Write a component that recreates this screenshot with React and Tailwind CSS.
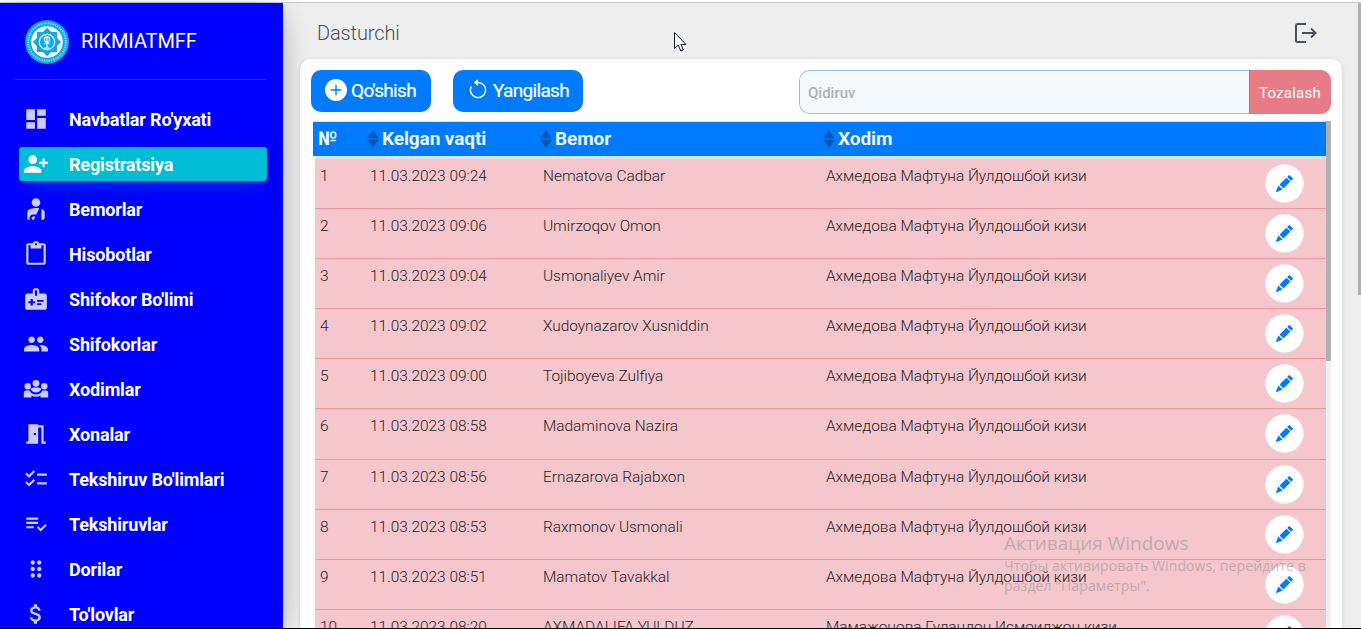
import { MdDashboard, MdPersonAddAlt1, MdPersonalInjury, MdContentPaste, MdMedicalInformation, MdPeople, MdMeetingRoom, MdChecklist, MdPlaylistAddCheck, MdDragIndicator, MdAttachMoney } from "react-icons/md";
import { BsPlusCircleFill, BsArrowCounterclockwise, BsPencilFill } from "react-icons/bs";

function Team({ className }) {
  return (
    <svg className={className} viewBox="0 0 26 26" fill="currentColor">
      <circle cx="13" cy="7.300" r="3.400" />
      <circle cx="4.700" cy="10.300" r="3.200" />
      <circle cx="21.300" cy="10.300" r="3.200" />
      <path d="M7.500 13q1-1.500 3-1.500h5q2 0 3 1.500-2 3.600-5.500 3.600T7.500 13z" />
      <path d="M.8 21.500v-4.700q0-2.300 2.300-2.300h3.300q2.300 4 6.600 4t6.600-4h3.300q2.300 0 2.300 2.300v4.700h-7.700v-2q-2 1.200-4.500 1.200T8.500 19.500v2z" />
    </svg>
  );
}

const nav = [
  ["Navbatlar Ro'yxati", MdDashboard],
  ["Registratsiya", MdPersonAddAlt1],
  ["Bemorlar", MdPersonalInjury],
  ["Hisobotlar", MdContentPaste],
  ["Shifokor Bo'limi", MdMedicalInformation],
  ["Shifokorlar", MdPeople],
  ["Xodimlar", Team],
  ["Xonalar", MdMeetingRoom],
  ["Tekshiruv Bo'limlari", MdChecklist],
  ["Tekshiruvlar", MdPlaylistAddCheck],
  ["Dorilar", MdDragIndicator],
  ["To'lovlar", MdAttachMoney],
];

const doctor = "Ахмедова Мафтуна Йулдошбой кизи";
const rows = [
  ["11.03.2023 09:24", "Nematova Cadbar", doctor],
  ["11.03.2023 09:06", "Umirzoqov Omon", doctor],
  ["11.03.2023 09:04", "Usmonaliyev Amir", doctor],
  ["11.03.2023 09:02", "Xudoynazarov Xusniddin", doctor],
  ["11.03.2023 09:00", "Tojiboyeva Zulfiya", doctor],
  ["11.03.2023 08:58", "Madaminova Nazira", doctor],
  ["11.03.2023 08:56", "Ernazarova Rajabxon", doctor],
  ["11.03.2023 08:53", "Raxmonov Usmonali", doctor],
  ["11.03.2023 08:51", "Mamatov Tavakkal", doctor],
  ["11.03.2023 08:20", "AXMADALIFA YULDUZ", "Мамажонова Гуландон Исмоилжон кизи"],
];

function Logo() {
  return (
    <svg className="mt-[2px] size-11" viewBox="0 0 44 44">
      <circle cx="22" cy="22" r="22" fill="#12a9e6" />
      <circle cx="22" cy="22" r="18.8" fill="none" stroke="#8dd6f4" strokeWidth="2" strokeDasharray="1.4 1" />
      <circle cx="22" cy="22" r="15.8" fill="#fff" />
      <g fill="#12a9e6">
        <rect x="12" y="12" width="20" height="20" />
        <rect x="12" y="12" width="20" height="20" transform="rotate(45 22 22)" />
      </g>
      <g fill="none">
        <circle cx="22" cy="22" r="7.7" stroke="#e4f7fe" strokeWidth="1.2" />
        <circle cx="22" cy="19.500" r="2.600" stroke="#fff" strokeWidth="1.1" />
        <path d="M22 17v11M19.500 24q2.500-2 5 0M19.500 28h5" stroke="#fff" strokeWidth="1.1" />
      </g>
    </svg>
  );
}

function Sort() {
  return (
    <svg className="mr-[3px] h-[18px] w-[12px] shrink-0" viewBox="0 0 12 18">
      <path d="M6 0l5.700 8.300H.3zM6 18L.3 9.700h11.400z" fill="#0057b5" />
    </svg>
  );
}

export default function App() {
  return (
    <div className="relative flex h-[629px] w-[1361px] flex-col overflow-hidden bg-white pt-[2px] font-['Roboto',sans-serif]">
      <div className="flex h-[626px] border-t border-[#c8c8c8] bg-[#eee]">
        <aside className="relative z-10 w-[283px] shrink-0 overflow-hidden bg-[#0000ff] text-white shadow-[0_10px_30px_-12px_rgba(0,0,0,0.42),0_4px_25px_0_rgba(0,0,0,0.12),0_8px_10px_-5px_rgba(0,0,0,0.2)]">
          <div className="ml-[14px] flex h-[77px] w-[253px] items-center border-b border-white/20 pl-[11px]">
            <Logo />
            <span className="ml-[12px] text-[20px] leading-none tracking-[-0.1px]">RIKMIATMFF</span>
          </div>
          <nav className="mt-[22px] ml-[19px] flex w-[248px] flex-col gap-[11.040px]">
            {nav.map(([label, Icon], i) => (
              <div key={label} className={i === 1 ? "flex h-[34px] shrink-0 items-center rounded-[3px] bg-[#00bcd4] pl-[4px] shadow-[0_12px_20px_-10px_rgba(0,188,212,.28),0_4px_20px_0_rgba(0,0,0,.12),0_7px_8px_-5px_rgba(0,188,212,.2)]" : "flex h-[34px] shrink-0 items-center pl-[4px]"}>
                <Icon className={i === 1 ? "size-[26px] shrink-0 text-white" : "size-[26px] shrink-0 text-white/80"} />
                <span className="mt-[2px] ml-[20px] text-[18px] leading-none font-bold tracking-[-0.16px] whitespace-nowrap">{label}</span>
              </div>
            ))}
          </nav>
        </aside>
        <main className="flex min-w-0 flex-1 flex-col overflow-hidden pl-[17px]">
          <header className="flex h-[56px] shrink-0 items-center justify-between pr-[41px] pl-[17px]">
            <span className="pt-[4px] text-[20px] leading-none font-light tracking-[-0.12px] text-[#495057]">Dasturchi</span>
            <svg className="mt-[3px] h-[22px] w-[24px]" viewBox="0 0 24 22" fill="none" stroke="#495057" strokeWidth="2">
              <path d="M13 2H4.500Q3 2 3 3.500v15Q3 20 4.500 20H13M9 11h13M18 6.500l4.500 4.500-4.500 4.500" />
            </svg>
          </header>
          <section className="flex w-[1042px] flex-1 flex-col overflow-hidden rounded-t-[10px] bg-white px-[11px] pt-[11px] shadow-[0_1px_4px_rgba(0,0,0,.14)]">
            <div className="flex h-[51px] shrink-0 items-start text-[19px] text-white">
              <button className="flex h-[42px] w-[120px] items-center rounded-[10px] bg-[#007bff] pb-[2px] pl-[14px] leading-none tracking-[-0.68px] [-webkit-text-stroke:0.2px_white]">
                <BsPlusCircleFill className="mr-[4px] size-[22px] [stroke-width:0]" />Qo'shish
              </button>
              <button className="ml-[22px] flex h-[42px] w-[130px] items-center rounded-[10px] bg-[#007bff] pb-[2px] pl-[14px] leading-none tracking-[-0.68px] [-webkit-text-stroke:0.2px_white]">
                <BsArrowCounterclockwise className="mr-[4px] size-[22px] [stroke-width:0]" />Yangilash
              </button>
              <div className="ml-auto flex h-[44px] w-[532px] overflow-hidden rounded-[10px] text-[15px]">
                <div className="flex flex-1 items-center rounded-l-[10px] border border-r-0 border-[#8bc0f5] bg-[#f4f9fe] pt-[2px] pl-[8px] font-medium text-[#adb1b5]">Qidiruv</div>
                <div className="flex w-[82px] items-center justify-center border-l border-[#cb6775] bg-[#e77c87] pt-[2px] pr-[1px] tracking-[.22px]">Tozalash</div>
              </div>
            </div>
            <div className="flex min-h-0 flex-1">
              <div className="ml-[2px] w-[1013px] shrink-0 overflow-hidden border-t border-[#dee2e6]">
                <div className="grid h-[34px] grid-cols-[49px_173px_283px_1fr] items-center bg-[#007bff] pb-[1px] pl-[5px] text-[19px] leading-none font-bold tracking-[-0.1px] text-[#edf5ff]">
                  <span>№</span>
                  <span className="flex items-center"><Sort />Kelgan vaqti</span>
                  <span className="flex items-center"><Sort />Bemor</span>
                  <span className="flex items-center"><Sort />Xodim</span>
                </div>
                <div className="ml-[2px] border-t-[3px] border-[#dee2e6] text-[15.400px] leading-[24px] font-light text-[#212529]">
                  {rows.map((r, i) => (
                    <div key={i} className="grid h-[50.100px] grid-cols-[50px_173px_283px_1fr_61px] border-b border-[#ed969e] bg-[#f5c6cb] pl-[5px]">
                      <span className="pt-[5px]">{i + 1}</span>
                      <span className="pt-[5px]">{r[0]}</span>
                      <span className="pt-[5px]">{r[1]}</span>
                      <span className="pt-[5px]">{r[2]}</span>
                      <span className="mt-[5px] flex size-[39px] items-center justify-center rounded-full border border-[#e8edf3] bg-white">
                        <BsPencilFill className="size-[17px] text-[#007bff]" />
                      </span>
                    </div>
                  ))}
                </div>
              </div>
              <div className="w-[5px] shrink-0 bg-[#f1f1f1]"><div className="h-[240px] bg-[#b0b0b0]" /></div>
            </div>
          </section>
        </main>
        <div className="w-[3px] shrink-0"><div className="h-[292px] bg-[#b0b0b0]" /></div>
      </div>
      <div className="h-px shrink-0 bg-black" />
      <svg className="absolute top-[32px] left-[674px] z-20 h-[20px] w-[13px]" viewBox="0 0 13 20">
        <path d="M.5.5v16l3.700-3.500 2.600 6 2.600-1-2.500-5.600h5z" fill="#fff" stroke="#15152a" />
      </svg>
      <div className="absolute top-[531px] left-[1004px] z-20 font-['Open_Sans',sans-serif] whitespace-nowrap text-[#999]/60">
        <div className="text-[19px] leading-[25px]">Активация Windows</div>
        <div className="text-[14px] leading-[20px] tracking-[0.1px]">Чтобы активировать Windows, перейдите в<br />раздел "Параметры".</div>
      </div>
    </div>
  );
}
